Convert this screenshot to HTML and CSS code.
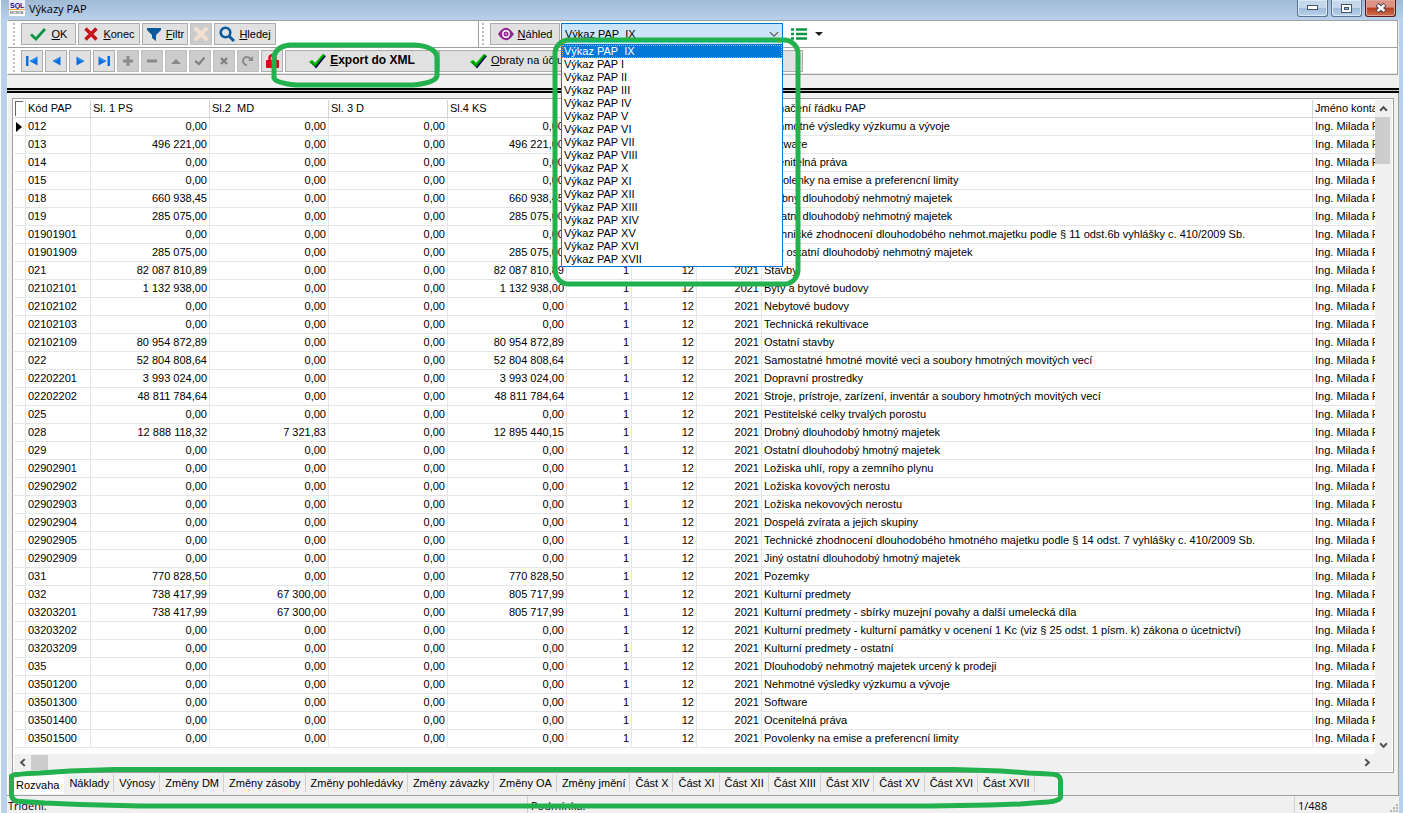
FILE: index.html
```html
<!DOCTYPE html>
<html lang="cs">
<head>
<meta charset="utf-8">
<title>Výkazy PAP</title>
<link rel="stylesheet" href="styles.css">
</head>
<body>
<svg class="sprite" aria-hidden="true">
  <symbol id="i-check" viewBox="0 0 16 16"><path d="M1 8.500 6 13 15 3" fill="none" stroke="#0b9444" stroke-width="2.800"/></symbol>
  <symbol id="i-check3d" viewBox="0 0 17 16"><path d="M1 9 3 7 6 10 14 1 16 2 6 14.500z" fill="#0a0a50" transform="translate(1 1)"/><path d="M0 9 3 7 6 10 14 1 16 2 6 14z" fill="#009a00"/><path d="M1 8.500 3 7 6 10.500 14 1" fill="none" stroke="#2be02b"/></symbol>
  <symbol id="i-cross" viewBox="0 0 16 16"><path d="M2.500 2.500 13.500 13.500M13.500 2.500 2.500 13.500" fill="none" stroke="currentColor" stroke-width="3.600"/></symbol>
  <symbol id="i-funnel" viewBox="0 0 16 16"><path d="M1 2H15V4L10 9V15L6 12V9L1 4z" fill="#0b5a9c"/></symbol>
  <symbol id="i-search" viewBox="0 0 16 16"><circle cx="6.500" cy="6.500" r="4.800" fill="none" stroke="#0b5a9c" stroke-width="2.600"/><path d="M10 10 15 15" stroke="#0b5a9c" stroke-width="3"/></symbol>
  <symbol id="i-eye" viewBox="0 0 16 14"><path d="M0 7Q8-5.500 16 7Q8 19.500 0 7z" fill="#92278f"/><circle cx="8" cy="7" r="3.900" fill="#fff"/><circle cx="8" cy="7" r="2.500" fill="#92278f"/><circle cx="8" cy="7" r=".8" fill="#fff"/></symbol>
  <symbol id="i-tri" viewBox="0 0 9 10"><path d="M8.500 .5V9.500L.5 5z" fill="#0a6fe0"/><path d="M7.500 2 3 5" stroke="#43a8ff"/></symbol>
  <symbol id="i-first" viewBox="0 0 12 10"><path d="M0 0H2.500V10H0zM11.500 .5V9.500L3.500 5z" fill="#0a6fe0"/><path d="M10.500 2 6 5" stroke="#43a8ff"/></symbol>
  <symbol id="i-lock" viewBox="0 0 13 14"><path d="M3.500 7V4A3 3 0 0 1 9.500 4V7" fill="none" stroke="#e2001a" stroke-width="2.400"/><rect y="6" width="13" height="8" rx="1" fill="#e2001a"/></symbol>
  <symbol id="i-chev" viewBox="0 0 8 6"><path d="M1 1 4 4.200 7 1" fill="none" stroke="currentColor" stroke-width="1.800"/></symbol>
</svg>

<div class="window">
  <header class="titlebar">
    <svg class="logo" viewBox="0 0 16 16" aria-hidden="true"><rect width="16" height="16" fill="#eef"/><rect y="10" width="16" height="6" fill="#fff"/><text x="1" y="8" class="logo-top">SQL</text><text x="1" y="14" class="logo-sub">EKONOM</text><rect y="9" width="16" height="1" fill="#f4a640"/></svg>
    <h1>Výkazy PAP</h1>
    <div class="winbtns">
      <button type="button" aria-label="Minimalizovat"><svg width="11" height="6"><rect x=".5" y=".5" width="10" height="4" fill="#fff" stroke="#46546a"/></svg></button>
      <button type="button" aria-label="Maximalizovat"><svg width="11" height="9"><rect x=".5" y=".5" width="10" height="8" fill="#fff" stroke="#46546a"/><rect x="3.500" y="3.500" width="4" height="2" fill="#8fb0d4" stroke="#46546a"/></svg></button>
      <button type="button" class="close" aria-label="Zavřít"><svg width="12" height="10"><path d="M2 1.500 10 8.500M10 1.500 2 8.500" stroke="#46404c" stroke-width="4.400"/><path d="M2.500 2 9.500 8M9.500 2 2.500 8" stroke="#fff" stroke-width="2.400"/></svg></button>
    </div>
  </header>

  <div class="client">
    <div class="toolbars">
      <div class="bar">
        <div class="band band-main">
          <span class="grip"></span>
          <button type="button" class="tb w55"><svg width="16" height="16"><use href="#i-check"/></svg><span><u>O</u>K</span></button>
          <button type="button" class="tb w62"><svg class="red" width="16" height="16"><use href="#i-cross"/></svg><span><u>K</u>onec</span></button>
          <button type="button" class="tb w46"><svg width="16" height="16"><use href="#i-funnel"/></svg><span><u>F</u>iltr</span></button>
          <button type="button" class="tb w22 off" aria-label="Zrušit filtr" disabled><svg class="pale" width="18" height="18"><use href="#i-cross"/></svg></button>
          <button type="button" class="tb w62"><svg width="16" height="16"><use href="#i-search"/></svg><span><u>H</u>ledej</span></button>
        </div>
        <div class="band">
          <span class="grip"></span>
          <button type="button" class="tb w70"><svg width="16" height="14"><use href="#i-eye"/></svg><span><u>N</u>áhled</span></button>
          <div class="combo">
            <select aria-label="Výkaz"><option>Výkaz PAP&nbsp; IX</option></select>
            <svg class="combo-arrow" width="10" height="7" viewBox="0 0 8 6" aria-hidden="true"><path d="M.5 1 4 4.500 7.500 1" fill="none" stroke="#555"/></svg>
            <ul class="list" role="listbox" aria-label="Seznam výkazů">
              <li role="option" aria-selected="true">Výkaz PAP&nbsp; IX</li><li role="option">Výkaz PAP I</li><li role="option">Výkaz PAP II</li><li role="option">Výkaz PAP III</li><li role="option">Výkaz PAP IV</li><li role="option">Výkaz PAP V</li><li role="option">Výkaz PAP VI</li><li role="option">Výkaz PAP VII</li><li role="option">Výkaz PAP VIII</li><li role="option">Výkaz PAP X</li><li role="option">Výkaz PAP XI</li><li role="option">Výkaz PAP XII</li><li role="option">Výkaz PAP XIII</li><li role="option">Výkaz PAP XIV</li><li role="option">Výkaz PAP XV</li><li role="option">Výkaz PAP XVI</li><li role="option">Výkaz PAP XVII</li>
            </ul>
          </div>
          <button type="button" class="listbtn" aria-label="Seznam"><svg width="32" height="12"><path d="M0 1.500H3M5 1.500H16M0 6H3M5 6H16M0 10.500H3M5 10.500H16" stroke="#0b9444" stroke-width="2.600"/><path d="M24 4H32L28 8z" fill="#222"/></svg></button>
        </div>
      </div>
      <div class="bar bar-nav">
        <div class="band">
          <span class="grip"></span>
          <button type="button" class="tb w22" aria-label="První"><svg width="12" height="10"><use href="#i-first"/></svg></button>
          <button type="button" class="tb w22" aria-label="Předchozí"><svg width="9" height="10"><use href="#i-tri"/></svg></button>
          <button type="button" class="tb w22" aria-label="Další"><svg class="flip" width="9" height="10"><use href="#i-tri"/></svg></button>
          <button type="button" class="tb w22" aria-label="Poslední"><svg class="flip" width="12" height="10"><use href="#i-first"/></svg></button>
          <button type="button" class="tb w22 off" aria-label="Přidat" disabled><svg width="10" height="10"><path d="M5 0V10M0 5H10" stroke="#8a8a8a" stroke-width="3"/></svg></button>
          <button type="button" class="tb w22 off" aria-label="Smazat" disabled><svg width="10" height="10"><path d="M0 5H10" stroke="#8a8a8a" stroke-width="3"/></svg></button>
          <button type="button" class="tb w22 off" aria-label="Upravit" disabled><svg width="10" height="10"><path d="M0 8 5 3 10 8z" fill="#8a8a8a"/></svg></button>
          <button type="button" class="tb w22 off" aria-label="Uložit" disabled><svg width="10" height="10"><path d="M0 5 4 8 9.500 1.500" fill="none" stroke="#808080" stroke-width="2.200"/></svg></button>
          <button type="button" class="tb w22 off" aria-label="Storno" disabled><svg width="8" height="8"><path d="M1 1 7 7M7 1 1 7" stroke="#808080" stroke-width="2.400"/></svg></button>
          <button type="button" class="tb w22 off" aria-label="Obnovit" disabled><svg width="12" height="11"><path d="M5 10A4 4 0 1 1 8.500 4" fill="none" stroke="#8a8a8a" stroke-width="2"/><path d="M11 1V6H6z" fill="#8a8a8a"/></svg></button>
          <button type="button" class="tb w22" aria-label="Zámek"><svg width="13" height="14"><use href="#i-lock"/></svg></button>
          <div class="wide">
            <button type="button" class="tb export"><svg width="17" height="16"><use href="#i-check3d"/></svg><span><u>E</u>xport do XML</span></button>
            <button type="button" class="tb turnover"><svg width="17" height="16"><use href="#i-check3d"/></svg><span><u>O</u>braty na účtu</span></button>
          </div>
        </div>
      </div>
    </div>
    <div class="spacer"></div>
    <div class="rule"></div>

    <main class="page">
      <div class="gridbox">
        <div class="viewport">
          <table>
            <colgroup><col class="c-mark"><col class="c-code"><col class="c-sum"><col class="c-sum"><col class="c-sum"><col class="c-sum"><col class="c-code"><col class="c-code"><col class="c-code"><col class="c-name"><col class="c-contact"></colgroup>
            <thead><tr><th><input type="checkbox" aria-label="Vybrat vše"></th><th>Kód PAP</th><th>Sl. 1 PS</th><th>Sl.2&nbsp; MD</th><th>Sl. 3 D</th><th>Sl.4 KS</th><th></th><th></th><th></th><th>Označení řádku PAP</th><th>Jméno konta</th></tr></thead>
            <tbody id="rows"></tbody>
          </table>
        </div>
        <div class="vscroll">
          <button type="button" aria-label="Nahoru"><svg class="up" width="9" height="7"><use href="#i-chev"/></svg></button>
          <span class="vthumb"></span>
          <button type="button" class="end" aria-label="Dolů"><svg width="9" height="7"><use href="#i-chev"/></svg></button>
        </div>
        <div class="hscroll">
          <button type="button" aria-label="Doleva"><svg class="left" width="9" height="7"><use href="#i-chev"/></svg></button>
          <span class="hthumb"></span>
          <button type="button" class="end" aria-label="Doprava"><svg class="right" width="9" height="7"><use href="#i-chev"/></svg></button>
        </div>
      </div>
      <div class="tabs" role="tablist">
        <button type="button" role="tab" aria-selected="true">Rozvaha</button><button type="button" role="tab">Náklady</button><button type="button" role="tab">Výnosy</button><button type="button" role="tab">Změny DM</button><button type="button" role="tab">Změny zásoby</button><button type="button" role="tab">Změny pohledávky</button><button type="button" role="tab">Změny závazky</button><button type="button" role="tab">Změny OA</button><button type="button" role="tab">Změny jmění</button><button type="button" role="tab">Část X</button><button type="button" role="tab">Část XI</button><button type="button" role="tab">Část XII</button><button type="button" role="tab">Část XIII</button><button type="button" role="tab">Část XIV</button><button type="button" role="tab">Část XV</button><button type="button" role="tab">Část XVI</button><button type="button" role="tab">Část XVII</button>
      </div>
    </main>
    <footer class="status">
      <span>Třídění:</span><span>Podmínka:</span><span>1/488</span>
      <svg class="sizer" width="10" height="10" aria-hidden="true"><path d="M7 0h2v2h-2zM7 3h2v2h-2zM7 6h2v2h-2zM4 3h2v2h-2zM4 6h2v2h-2zM1 6h2v2h-2z" fill="#b5b5b5"/></svg>
    </footer>
  </div>

  <svg class="marks" width="1070" height="813" aria-hidden="true">
    <g fill="none" stroke="#22b14c" stroke-width="5" stroke-linejoin="round">
      <path d="M290 45H415Q437 47 437 58V76Q435 83 413 85H296Q276 83 274 78V56Q277 46 290 45z"/>
      <rect x="555" y="40" width="243" height="244" rx="14"/>
      <path d="M11.500 776Q14 774 40 773L70 771 115 769.500H954L1001 771 1028 773 1050 774Q1060 774 1060.500 780V797Q1060 802 1040 802.500L1020 804 990 805 930 806H140L80 804.500 45 803 22 801.500Q12 802 11.500 795z"/>
    </g>
  </svg>
</div>
<script src="rows.js"></script>
</body>
</html>
```
FILE: styles.css
```css
* { box-sizing: border-box; }
body { margin: 0; background: #b9d1ea; color: #000; font: 11px/13px "Liberation Sans", Arial, sans-serif; }
button, select, input { font: inherit; color: inherit; margin: 0; padding: 0; }
h1, ul { margin: 0; padding: 0; }
.sprite { position: absolute; width: 0; height: 0; }

.window { position: relative; display: flex; flex-direction: column; min-height: 100vh; padding: 0 4px 0 6px; border-left: 1px solid #fff; overflow: hidden; }
.titlebar { display: flex; align-items: flex-start; height: 20px; gap: 4px; margin: 0 -4px 0 -6px; padding: 0 7px 0 8px; background: linear-gradient(#a0bad6, #b9d1ea); }
.titlebar h1 { flex: 1; font: 11px/17px "Open Sans", "Noto Sans", sans-serif; }
.logo { width: 16px; height: 16px; }
.logo-top { font: bold 7px "Liberation Sans", sans-serif; fill: #101090; }
.logo-sub { font: 3px "Liberation Sans", sans-serif; fill: #111; }
.winbtns { display: flex; gap: 3px; }
.winbtns button { display: flex; align-items: center; justify-content: center; width: 31px; height: 17px; border: 1px solid #5c7391; border-top: 0; border-radius: 0 0 3px 3px; background: linear-gradient(#c5d7eb 50%, #9fbbd9 50%, #b9d3ee); box-shadow: inset 0 0 0 1px #d9e8f7; }
.winbtns .close { border-color: #5a1a1a; background: linear-gradient(#dc9285 45%, #b83a22 50%, #cf7250); box-shadow: inset 0 0 0 1px #e0a598; }

.client { flex: 1; display: flex; flex-direction: column; background: #f0f0f0; }
.toolbars { margin-right: 1px; border: 1px solid #a0a0a0; border-left-color: #fff; background: #fff; }
.bar { display: flex; height: 27px; border-bottom: 1px solid #a0a0a0; }
.bar-nav { height: 26px; border-bottom: 1px solid #e3e3e3; }
.band { display: flex; flex: 1; align-items: center; gap: 2px; padding-left: 3px; }
.band-main { flex: 0 0 471px; padding-left: 5px; border-right: 1px solid #a0a0a0; }
.bar-nav .band { padding-left: 5px; }
.grip { width: 2px; height: 22px; margin-right: 4px; background: repeating-linear-gradient(#bdbdbd 0 2px, #fff 2px 4px); }
.tb { display: flex; align-items: center; justify-content: center; gap: 4px; height: 22px; border: 1px solid #adadad; background: #e1e1e1; white-space: nowrap; }
.tb svg { flex: none; }
.w22 { width: 22px; }
.w46 { width: 46px; }
.w55 { width: 55px; gap: 6px; }
.w62 { width: 62px; }
.w70 { width: 70px; }
.off { background: #ccc; border-color: #bfbfbf; }
.red { color: #c4161c; }
.pale { color: #f3dfcf; }
.flip { transform: scaleX(-1); }
.wide { display: flex; }
.export { width: 154px; font-weight: bold; font-size: 12px; }
.turnover { width: 364px; justify-content: flex-start; padding-left: 30px; }

.combo { position: relative; width: 222px; height: 22px; margin-left: -1px; }
.combo select { display: block; width: 100%; height: 22px; padding: 0 3px; appearance: none; border: 1px solid #0078d7; border-radius: 0; background: #cce4f7; }
.combo-arrow { position: absolute; top: 8px; right: 4px; pointer-events: none; }
.list { position: absolute; z-index: 2; top: 21px; left: 0; width: 100%; list-style: none; border: 1px solid #0078d7; background: #fff; }
.list li { height: 13px; padding-left: 2px; }
.list [aria-selected="true"] { background: #0078d7; color: #fff; outline: 1px dotted #e8a15c; outline-offset: -1px; }
.listbtn { display: flex; margin-left: 6px; border: 0; background: none; }

.spacer { height: 13px; }
.rule { height: 5px; border-top: 2px solid #000; border-bottom: 2px solid #000; background: #d0d0d0; }
.page { flex: 1; padding: 5px 4px 0 5px; border-right: 1px solid #a0a0a0; border-bottom: 1px solid #a0a0a0; background: linear-gradient(90deg, #fff 1px, transparent 1px); }
.gridbox { display: grid; grid-template-columns: minmax(0, 1fr) 17px; grid-template-rows: auto 17px; border: 1px solid #a0a0a0; padding: 1px; background: #fff; }
.viewport { overflow: hidden; padding-bottom: 6px; }
table { width: 1500px; table-layout: fixed; border-collapse: separate; border-spacing: 0; }
.c-mark { width: 12px; }
.c-code { width: 65px; }
.c-sum { width: 119px; }
.c-name { width: 551px; }
th, td { height: 18px; padding: 0 2px; border-right: 1px solid #e6e6e6; border-bottom: 1px solid #e6e6e6; text-align: left; font-weight: normal; white-space: nowrap; overflow: hidden; }
th { border-color: #d4d4d4; }
th:first-child, td:first-child { padding: 0; }
th input { display: block; width: 8px; height: 15px; margin-left: 1px; appearance: none; border: 1px solid #666; border-right: 0; border-bottom: 0; }
.num { text-align: right; }
.current { display: block; width: 0; margin-left: 2px; border: 5px solid transparent; border-left: 6px solid #000; border-right: 0; }
.vscroll { display: flex; flex-direction: column; background: #f0f0f0; }
.vscroll button, .hscroll button { display: flex; align-items: center; justify-content: center; width: 17px; height: 17px; border: 0; background: none; color: #505050; }
.vthumb { width: 15px; height: 47px; background: #cdcdcd; }
.vscroll .end { margin-top: auto; }
.hscroll { grid-column: 1 / -1; display: flex; align-items: center; background: #f0f0f0; }
.hthumb { width: 17px; height: 15px; background: #cdcdcd; }
.hscroll .end { margin-left: auto; margin-right: 16px; }
.up { transform: rotate(180deg); }
.left { transform: rotate(90deg); }
.right { transform: rotate(-90deg); }

.tabs { display: flex; height: 22px; margin-left: -1px; padding-top: 1px; }
.tabs button { height: 18px; padding: 0 4px 0 5px; border: 0; border-right: 1px solid #d0d0d0; background: none; white-space: nowrap; }
.tabs [aria-selected="true"] { height: 20px; background: #fff; padding: 3px 5px 0; border: 0; }

.status { display: flex; align-items: center; height: 18px; font: 11px/20px "Open Sans", "Noto Sans", sans-serif; }
.status span { height: 18px; padding-left: 3px; border-left: 1px solid #d0d0d0; }
.status span:nth-child(1) { width: 520px; padding-left: 1px; border: 0; }
.status span:nth-child(2) { flex: 1; }
.status span:nth-child(3) { width: 95px; }
.sizer { align-self: flex-end; }

.marks { position: absolute; z-index: 3; top: 0; left: -1px; pointer-events: none; }
```
FILE: rows.js
```js
// code | opening balance | debit | credit | closing balance | row name
const data = `012|||||Nehmotné výsledky výzkumu a vývoje
013|496 221,00|||496 221,00|Software
014|||||Ocenitelná práva
015|||||Povolenky na emise a preferencní limity
018|660 938,45|||660 938,45|Drobný dlouhodobý nehmotný majetek
019|285 075,00|||285 075,00|Ostatní dlouhodobý nehmotný majetek
01901901|||||Technické zhodnocení dlouhodobého nehmot.majetku podle § 11 odst.6b vyhlášky c. 410/2009 Sb.
01901909|285 075,00|||285 075,00|Jiný ostatní dlouhodobý nehmotný majetek
021|82 087 810,89|||82 087 810,89|Stavby
02102101|1 132 938,00|||1 132 938,00|Byty a bytové budovy
02102102|||||Nebytové budovy
02102103|||||Technická rekultivace
02102109|80 954 872,89|||80 954 872,89|Ostatní stavby
022|52 804 808,64|||52 804 808,64|Samostatné hmotné movité veci a soubory hmotných movitých vecí
02202201|3 993 024,00|||3 993 024,00|Dopravní prostredky
02202202|48 811 784,64|||48 811 784,64|Stroje, prístroje, zarízení, inventár a soubory hmotných movitých vecí
025|||||Pestitelské celky trvalých porostu
028|12 888 118,32|7 321,83||12 895 440,15|Drobný dlouhodobý hmotný majetek
029|||||Ostatní dlouhodobý hmotný majetek
02902901|||||Ložiska uhlí, ropy a zemního plynu
02902902|||||Ložiska kovových nerostu
02902903|||||Ložiska nekovových nerostu
02902904|||||Dospelá zvírata a jejich skupiny
02902905|||||Technické zhodnocení dlouhodobého hmotného majetku podle § 14 odst. 7 vyhlášky c. 410/2009 Sb.
02902909|||||Jiný ostatní dlouhodobý hmotný majetek
031|770 828,50|||770 828,50|Pozemky
032|738 417,99|67 300,00||805 717,99|Kulturní predmety
03203201|738 417,99|67 300,00||805 717,99|Kulturní predmety - sbírky muzejní povahy a další umelecká díla
03203202|||||Kulturní predmety - kulturní památky v ocenení 1 Kc (viz § 25 odst. 1 písm. k) zákona o úcetnictví)
03203209|||||Kulturní predmety - ostatní
035|||||Dlouhodobý nehmotný majetek urcený k prodeji
03501200|||||Nehmotné výsledky výzkumu a vývoje
03501300|||||Software
03501400|||||Ocenitelná práva
03501500|||||Povolenky na emise a preferencní limity`;

document.getElementById("rows").innerHTML = data.split("\n").map((line, i) => {
  const [code, ...rest] = line.split("|");
  const name = rest.pop();
  const nums = rest.map(v => v || "0,00").concat("1", "12", "2021");
  return `<tr><td>${i === 0 ? '<span class="current"></span>' : ""}</td><td>${code}</td>` +
    nums.map(v => `<td class="num">${v}</td>`).join("") +
    `<td>${name}</td><td>Ing. Milada F</td></tr>`;
}).join("");
```
